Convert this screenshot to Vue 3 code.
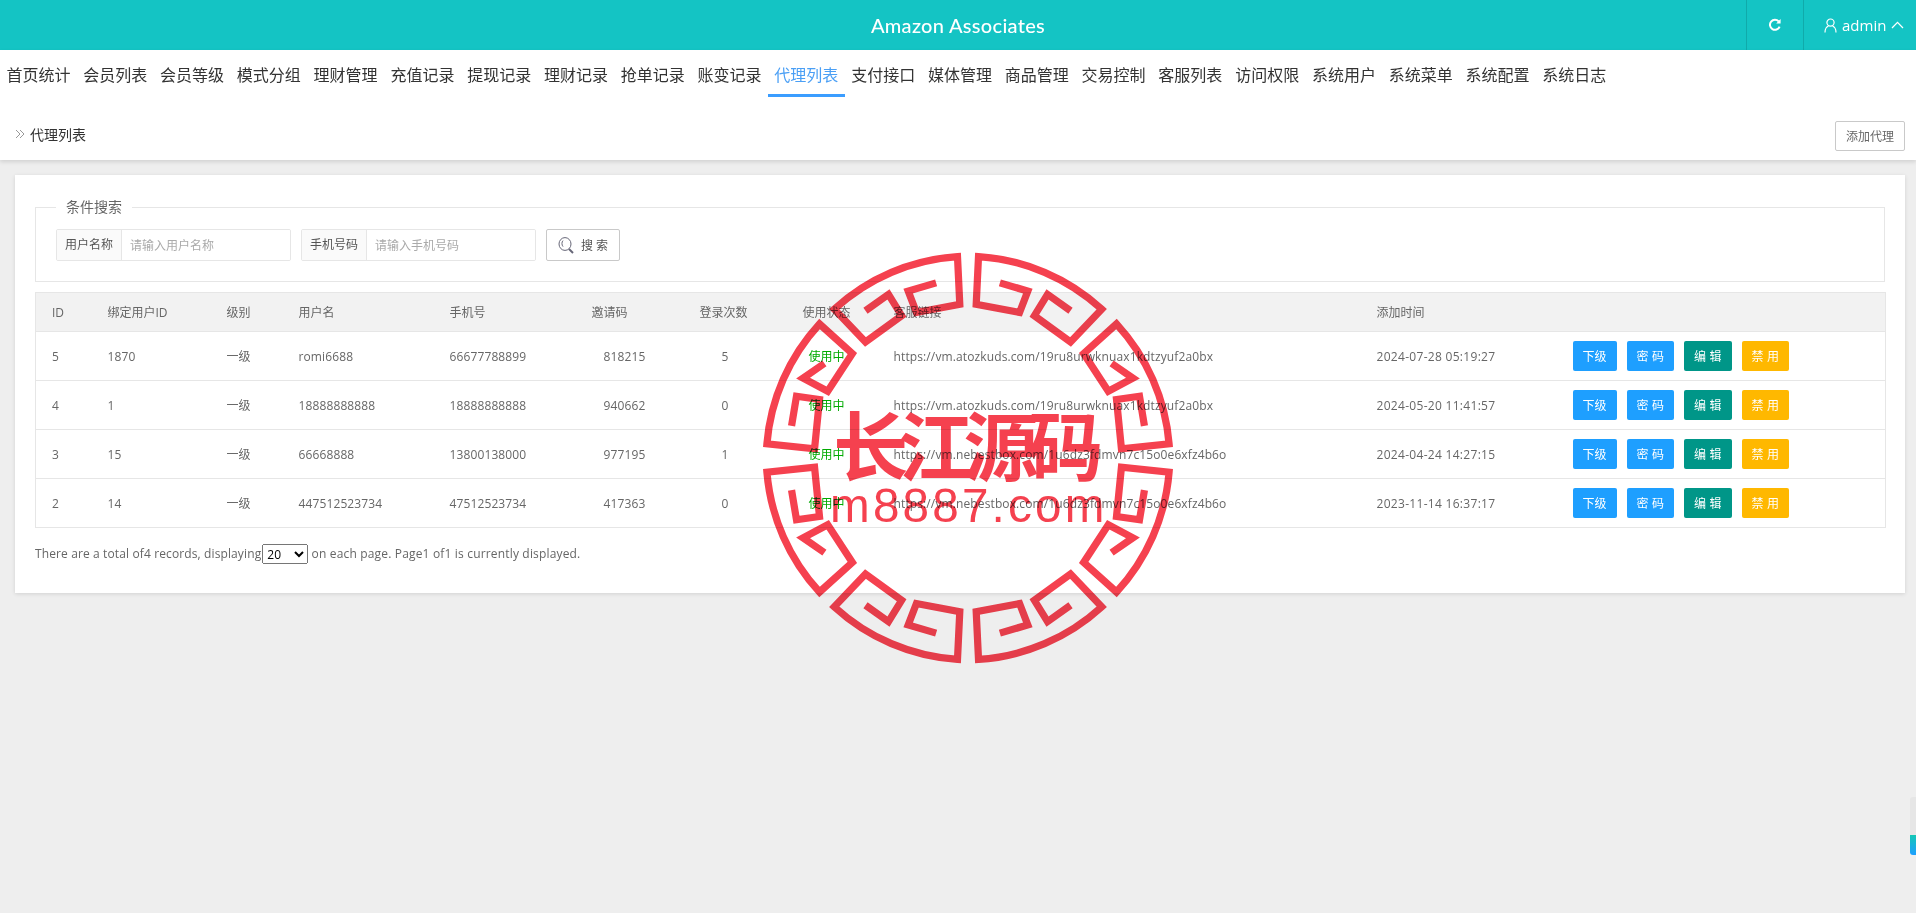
<template>
  <div class="page">
    <header class="topbar">
      <span></span>
      <h1 class="brand">Amazon Associates</h1>
      <div class="top-tools">
        <div class="tool tool-refresh">
          <svg width="14" height="14" viewBox="0 0 14 14" fill="none" stroke="#fff" stroke-width="2">
            <path d="M11.6 8.6A5 5 0 1 1 10.7 3.4" />
            <path d="M12.6 1v4.4H8.2" fill="#fff" stroke="none" />
          </svg>
        </div>
        <div class="tool tool-user">
          <svg width="13" height="15" viewBox="0 0 13 15" fill="none" stroke="#fff" stroke-width="1.2">
            <circle cx="6.5" cy="4.6" r="3.6" />
            <path d="M1 14.5c0-3.4 1.8-6 3.4-6.4M12 14.5c0-3.4-1.8-6-3.4-6.4" />
          </svg>
          <span>admin</span>
          <svg width="13" height="8" viewBox="0 0 13 8" fill="none" stroke="#fff" stroke-width="1.3">
            <path d="M1 7l5.5-5.6L12 7" />
          </svg>
        </div>
      </div>
    </header>

    <div class="subhead">
      <nav class="menu">
        <a v-for="item in menu" :key="item" class="menu-item" :class="{ active: item === '代理列表' }">{{ item }}</a>
      </nav>
      <div class="crumb-row">
        <div class="crumb">
          <svg width="10" height="10" viewBox="0 0 10 10" fill="none" stroke="#999" stroke-width="1">
            <path d="M1 1l4 4-4 4M5 1l4 4-4 4" />
          </svg>
          <span>代理列表</span>
        </div>
        <button class="add-btn">添加代理</button>
      </div>
    </div>

    <main class="card">
      <fieldset class="search-box">
        <legend>条件搜索</legend>
        <div class="search-row">
          <label class="field">
            <span class="field-label">用户名称</span>
            <input placeholder="请输入用户名称">
          </label>
          <label class="field">
            <span class="field-label">手机号码</span>
            <input placeholder="请输入手机号码">
          </label>
          <button class="search-btn">
            <svg width="17" height="17" viewBox="0 0 17 17" fill="none" stroke="#667" stroke-width="1">
              <ellipse cx="7" cy="7" rx="6" ry="6.4" />
              <path d="M5 3.6C3.6 5 3.6 8 5 9.6" />
              <path d="M11 12l4 4" stroke-width="2" />
            </svg>
            <span>搜 索</span>
          </button>
        </div>
      </fieldset>

      <table class="grid">
        <colgroup>
          <col v-for="w in colWidths" :key="w.id" :width="w.px">
        </colgroup>
        <thead>
          <tr>
            <th v-for="h in headers" :key="h">{{ h }}</th>
          </tr>
        </thead>
        <tbody>
          <tr v-for="r in rows" :key="r.id">
            <td>{{ r.id }}</td>
            <td>{{ r.bind }}</td>
            <td>一级</td>
            <td>{{ r.name }}</td>
            <td>{{ r.phone }}</td>
            <td class="c-code">{{ r.code }}</td>
            <td class="c-count">{{ r.count }}</td>
            <td class="c-status">使用中</td>
            <td>{{ r.link }}</td>
            <td class="c-time">{{ r.time }}</td>
            <td>
              <div class="ops">
                <button class="op blue">下级</button>
                <button class="op blue">密 码</button>
                <button class="op green">编 辑</button>
                <button class="op amber">禁 用</button>
              </div>
            </td>
          </tr>
        </tbody>
      </table>

      <p class="pager">There are a total of4 records, displaying<select class="page-size"><option>20</option></select><span class="pager-rest"> on each page. Page1 of1 is currently displayed.</span></p>
    </main>

    <!-- stamp lying over the page -->
    <div class="stamp">
      <svg width="414" height="414" viewBox="-630 -630 1260 1260">
        <g v-for="t in stampFlips" :key="t" :transform="t" fill="none" stroke="#f5414f" stroke-width="22" stroke-linejoin="miter">
          <path d="M97 -533L182 -508L157 -443L25 -468L32 -613A613 613 0 0 1 407 -453L312 -353L202 -433L242 -498L312 -448" />
          <path d="M437 -288L502 -243L427 -203L352 -318L452 -408A613 613 0 0 1 612 -43L467 -28L452 -178L522 -188L537 -98" />
        </g>
        <text class="stamp-cn" x="-410" y="52" textLength="822" lengthAdjust="spacing">长江源码</text>
        <text class="stamp-en" x="-420" y="194" textLength="835" lengthAdjust="spacing">m8887.com</text>
      </svg>
    </div>

    <div class="side-meter"></div>
  </div>
</template>

<script setup>
const menu = ['首页统计', '会员列表', '会员等级', '模式分组', '理财管理', '充值记录', '提现记录', '理财记录', '抢单记录', '账变记录', '代理列表', '支付接口', '媒体管理', '商品管理', '交易控制', '客服列表', '访问权限', '系统用户', '系统菜单', '系统配置', '系统日志']

const headers = ['ID', '绑定用户ID', '级别', '用户名', '手机号', '邀请码', '登录次数', '使用状态', '客服链接', '添加时间', '']

const colWidths = [56, 119, 72, 151, 142, 108, 103, 91, 483, 196, 329].map((px, id) => ({ id, px }))

const rows = [
  { id: 5, bind: 1870, name: 'romi6688', phone: '66677788899', code: 818215, count: 5, link: 'https://vm.atozkuds.com/19ru8urwknuax1kdtzyuf2a0bx', time: '2024-07-28 05:19:27' },
  { id: 4, bind: 1, name: '18888888888', phone: '18888888888', code: 940662, count: 0, link: 'https://vm.atozkuds.com/19ru8urwknuax1kdtzyuf2a0bx', time: '2024-05-20 11:41:57' },
  { id: 3, bind: 15, name: '66668888', phone: '13800138000', code: 977195, count: 1, link: 'https://vm.nebestbox.com/1u6dz3fdmvn7c15o0e6xfz4b6o', time: '2024-04-24 14:27:15' },
  { id: 2, bind: 14, name: '447512523734', phone: '47512523734', code: 417363, count: 0, link: 'https://vm.nebestbox.com/1u6dz3fdmvn7c15o0e6xfz4b6o', time: '2023-11-14 16:37:17' }
]

const stampFlips = ['scale(1 1)', 'scale(-1 1)', 'scale(1 -1)', 'scale(-1 -1)']
</script>

<style>
html, body { margin: 0; background: #eee; }
</style>

<style scoped>
.page {
  position: relative;
  min-height: 913px;
  background: #eee;
  font-family: "Open Sans", "Noto Sans CJK SC", sans-serif;
  font-size: 12px;
  color: #666;
  overflow: hidden;
}

.topbar {
  display: grid;
  grid-template-columns: 1fr auto 1fr;
  align-items: center;
  height: 50px;
  background: #14c4c4;
  color: #fff;
}

.brand {
  margin: 0;
  font-family: Lato, sans-serif;
  font-size: 20px;
  font-weight: 500;
  letter-spacing: .3px;
}

.top-tools {
  display: flex;
  justify-content: flex-end;
  height: 50px;
}

.tool {
  display: flex;
  align-items: center;
  border-left: 1px solid #10aaaa;
}

.tool-refresh {
  width: 56px;
  justify-content: center;
}

.tool-user {
  width: 113px;
  box-sizing: border-box;
  gap: 5px;
  padding-left: 20px;
  font-size: 15px;
}

.subhead {
  background: #fff;
  box-shadow: 0 2px 4px rgba(0, 0, 0, .12);
  position: relative;
}

.menu {
  display: flex;
  height: 47px;
}

.menu-item {
  box-sizing: border-box;
  height: 47px;
  padding: 0 6.4px;
  line-height: 50px;
  font-size: 16px;
  color: #333;
  white-space: nowrap;
}

.menu-item.active {
  color: #4a9ff5;
  border-bottom: 3px solid #3b9dff;
}

.crumb-row {
  display: flex;
  align-items: center;
  justify-content: space-between;
  box-sizing: border-box;
  height: 63px;
  padding: 14px 11px 0 15px;
}

.crumb {
  display: flex;
  align-items: center;
  gap: 5px;
  padding-bottom: 3px;
  font-size: 14px;
  color: #333;
}

.add-btn {
  width: 70px;
  height: 30px;
  padding: 0;
  background: #fff;
  border: 1px solid #c9c9c9;
  border-radius: 2px;
  font: inherit;
  font-size: 12px;
  color: #666;
}

.card {
  margin: 15px 11px 0 15px;
  padding: 22px 20px 20px;
  height: 418px;
  box-sizing: border-box;
  background: #fff;
  box-shadow: 0 1px 4px rgba(0, 0, 0, .12);
}

.search-box {
  margin: 0 0 10px;
  padding: 12px 20px 0;
  height: 85px;
  box-sizing: border-box;
  border: 1px solid #e6e6e6;
}

.search-box legend {
  padding: 0 10px;
  margin-left: 0;
  font-size: 14px;
  line-height: 20px;
}

.search-row {
  display: flex;
  gap: 10px;
}

.field {
  display: flex;
  width: 235px;
  height: 32px;
  box-sizing: border-box;
  border: 1px solid #e6e6e6;
  border-radius: 2px;
  overflow: hidden;
}

.field-label {
  width: 65px;
  flex: none;
  box-sizing: border-box;
  background: #fafafa;
  border-right: 1px solid #e6e6e6;
  text-align: center;
  line-height: 30px;
  color: #555;
}

.field input {
  flex: 1;
  min-width: 0;
  padding: 0 8px;
  border: 0;
  outline: 0;
  font: inherit;
}

.field input::placeholder {
  color: #aaa;
}

.search-btn {
  display: flex;
  align-items: center;
  gap: 6px;
  width: 74px;
  height: 32px;
  padding: 0 0 0 11px;
  background: #fff;
  border: 1px solid #c9c9c9;
  border-radius: 2px;
  font: inherit;
  color: #555;
}

.grid {
  width: 1850px;
  table-layout: fixed;
  border-collapse: collapse;
  border: 1px solid #e6e6e6;
}

.grid th {
  height: 38px;
  padding: 0 16px;
  background: #f2f2f2;
  border-bottom: 1px solid #e6e6e6;
  text-align: left;
  font-weight: 400;
}

.grid td {
  height: 48px;
  padding: 0 16px;
  border-bottom: 1px solid #e6e6e6;
  white-space: nowrap;
  letter-spacing: .12px;
}

.grid td.c-code { padding-left: 28px; }
.grid td.c-count { padding-left: 38px; }
.grid td.c-status { padding-left: 22px; color: #01aa01; letter-spacing: 0; }
.grid td.c-time { letter-spacing: .3px; }

.ops {
  display: flex;
  align-items: center;
  gap: 10px;
}

.op {
  height: 30px;
  padding: 0 10px;
  border: 0;
  border-radius: 2px;
  font: inherit;
  letter-spacing: 0;
  word-spacing: .4px;
  color: #fff;
}

.blue { background: #1e9fff; }
.green { background: #009688; }
.amber { background: #ffb800; }

.pager {
  margin: 16px 0 0;
  line-height: 20px;
  letter-spacing: .12px;
}

.pager-rest {
  letter-spacing: .17px;
}

.page-size {
  width: 46px;
  height: 20px;
  margin: 0 0 0 1px;
  font: inherit;
  letter-spacing: 0;
  vertical-align: top;
}

.stamp {
  position: absolute;
  left: 761px;
  top: 251px;
  width: 414px;
  height: 414px;
  pointer-events: none;
  mix-blend-mode: multiply;
}

.stamp-cn {
  font-family: "Noto Sans CJK SC", sans-serif;
  font-weight: 700;
  font-size: 228px;
  fill: #f5414f;
}

.stamp-en {
  font-family: "Liberation Sans", sans-serif;
  font-size: 145px;
  fill: #f5414f;
}

.side-meter {
  position: absolute;
  right: 0;
  top: 797px;
  width: 6px;
  height: 58px;
  border-radius: 3px 0 0 3px;
  background: linear-gradient(#e6e6e6 0, #e6e6e6 65%, #14c8b4 65%, #1e9fff 100%);
}
</style>
